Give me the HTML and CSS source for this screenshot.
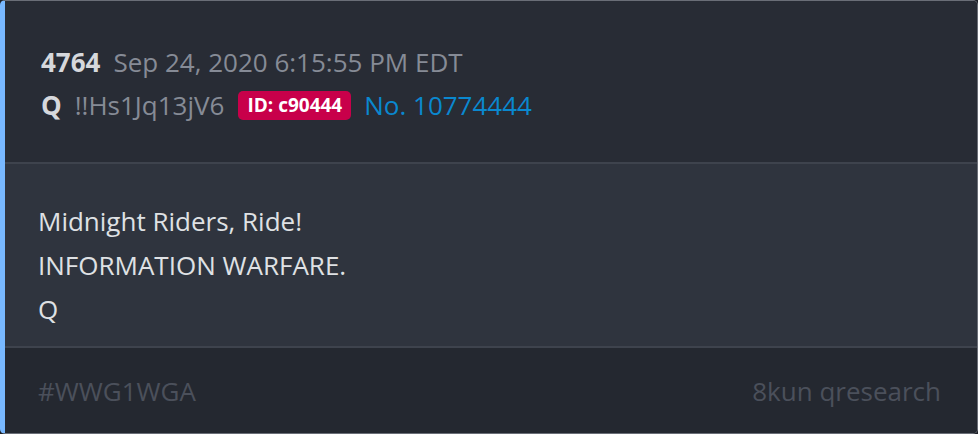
FILE: index.html
```html
<!DOCTYPE html>
<html lang="en">
<head>
    <meta charset="UTF-8">
    <title>Q Drop 4764</title>
    <link rel="stylesheet" href="styles.css">
</head>
<body>
    <div class="post">
        <div class="post-header">
            <div class="meta-line">
                <span class="drop-num">4764</span>
                <span class="drop-date">Sep 24, 2020 6:15:55 PM EDT</span>
            </div>
            <div class="meta-line">
                <span class="author">Q</span>
                <span class="trip">!!Hs1Jq13jV6</span>
                <span class="user-id">ID: c90444</span>
                <span class="post-no">No. 10774444</span>
            </div>
        </div>
        <div class="post-body">
            <p>Midnight Riders, Ride!</p>
            <p>INFORMATION WARFARE.</p>
            <p>Q</p>
        </div>
        <div class="post-footer">
            <span>#WWG1WGA</span>
            <span>8kun qresearch</span>
        </div>
    </div>
</body>
</html>
```

FILE: styles.css
```css
body {
    margin: 0;
    background-color: #1e2128;
    font-family: "Open Sans", sans-serif;
}
.post {
    height: 434px;
    box-sizing: border-box;
    border: 1px solid #6a6e77;
    border-left: 5px solid #78b8ff;
    border-radius: 5px;
    overflow: hidden;
    display: flex;
    flex-direction: column;
    font-size: 26px;
}
.post-header {
    background-color: #282c35;
    padding: 43px 36px 39px 36px;
    display: flex;
    flex-direction: column;
    gap: 7px;
}
.meta-line {
    display: flex;
    align-items: center;
    gap: 13px;
    line-height: 36px;
}
.drop-num, .author {
    font-weight: bold;
    color: #d6d8dc;
}
.drop-date, .trip {
    color: #868b96;
}
.user-id {
    background-color: #c8004a;
    color: #fff;
    font-weight: bold;
    font-size: 19px;
    line-height: 29px;
    padding: 0 9px;
    margin-left: 1px;
    border-radius: 5px;
}
.post-no {
    color: #0a88cf;
}
.post-body {
    background-color: #2f343e;
    border-top: 2px solid #3e434d;
    border-bottom: 2px solid #3e434d;
    padding: 35px 33px 15px 33px;
    color: #dfe1e4;
}
.post-body p {
    margin: 0;
    line-height: 44px;
}
.post-footer {
    flex: 1;
    background-color: #242830;
    padding: 25px 36px 0 33px;
    display: flex;
    justify-content: space-between;
    line-height: 36px;
    color: #4b505b;
}
```
